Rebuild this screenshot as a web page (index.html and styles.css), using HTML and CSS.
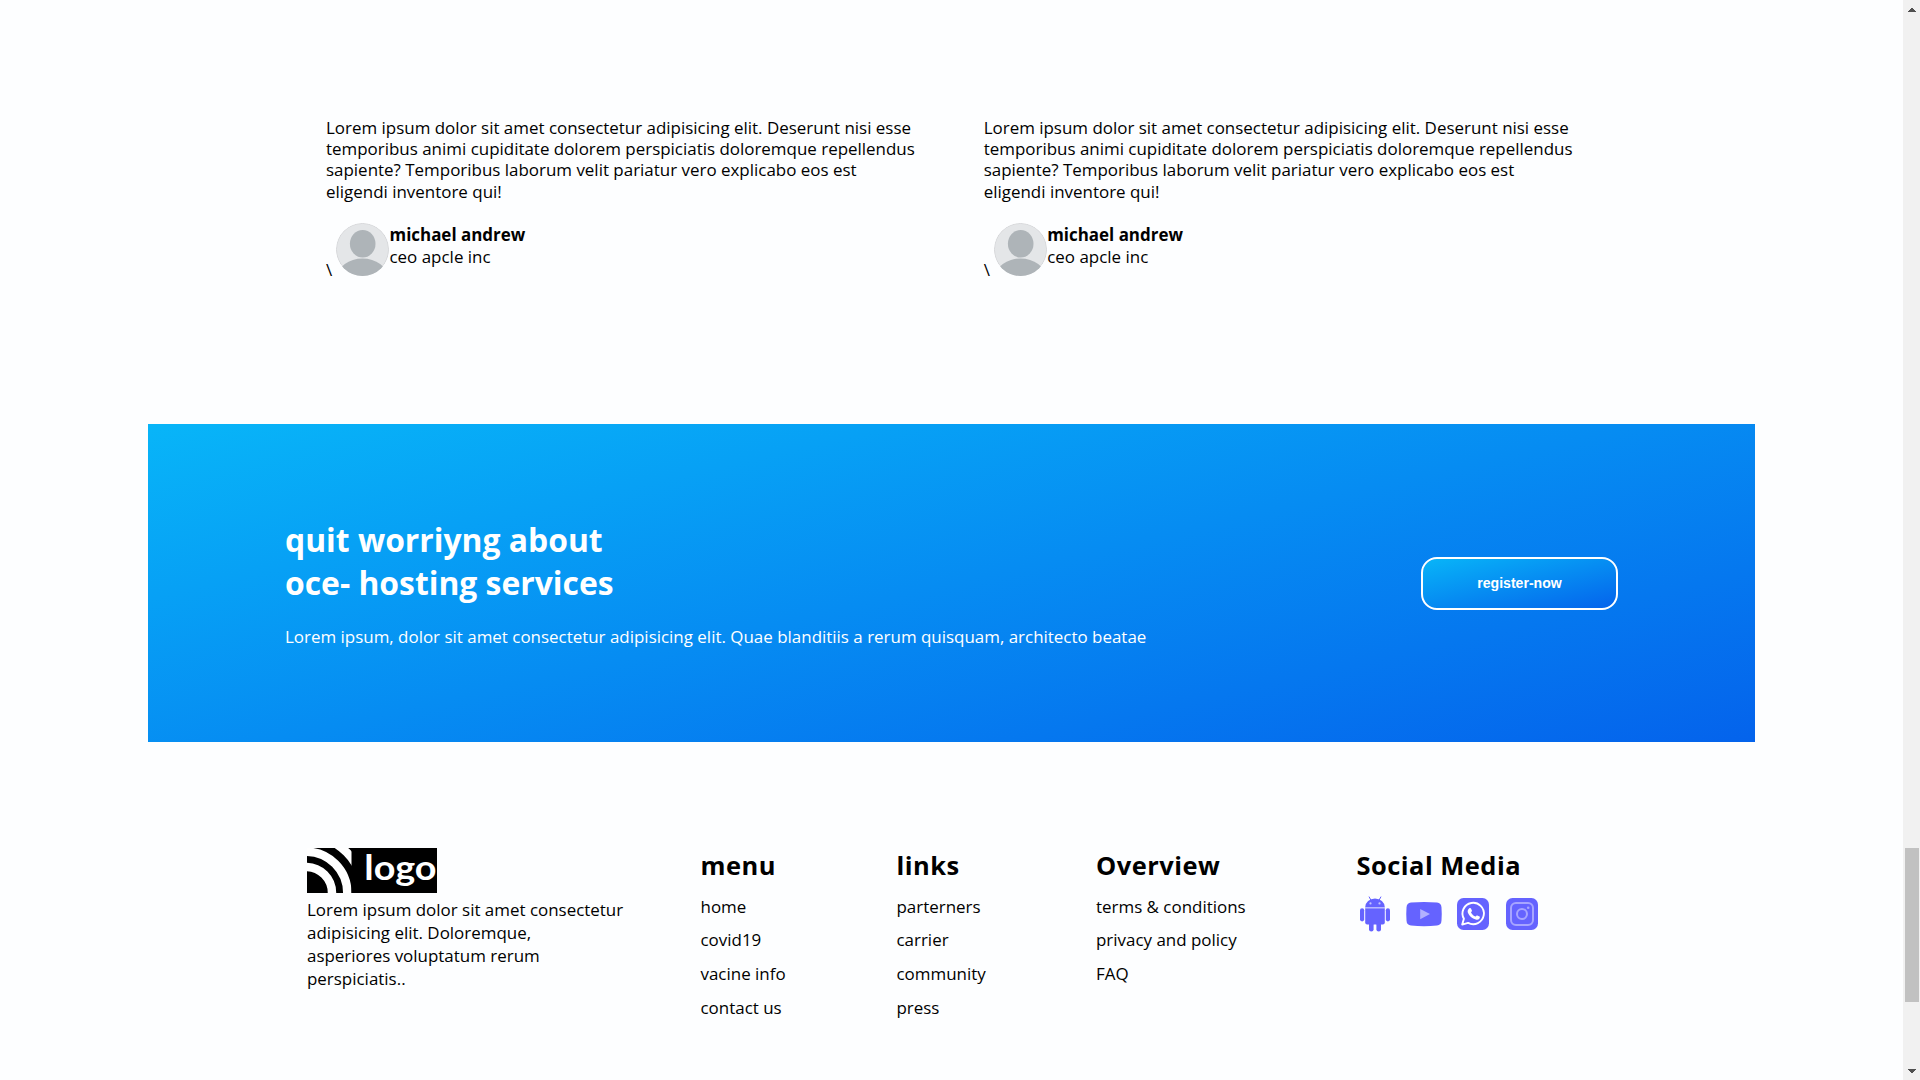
FILE: index.html
```html
<!DOCTYPE html>
<html lang="en">
<head>
<meta charset="utf-8">
<title>Hosting services</title>
<link rel="stylesheet" href="styles.css">
</head>
<body>
<div class="page">
  <section class="testimonials">
    <article class="testimonial">
      <p class="quote">Lorem ipsum dolor sit amet consectetur adipisicing elit. Deserunt nisi esse<br>temporibus animi cupiditate dolorem perspiciatis doloremque repellendus<br>sapiente? Temporibus laborum velit pariatur vero explicabo eos est<br>eligendi inventore qui!</p>
      <div class="author">
        <span class="slash">\</span>
        <svg class="avatar" viewBox="0 0 53 53"><defs><clipPath id="face"><circle cx="26.5" cy="26.5" r="26.5"/></clipPath></defs><g clip-path="url(#face)"><circle cx="26.5" cy="26.5" r="26.1" fill="#e4e6e8" stroke="#cfd1d3" stroke-width=".8"/><ellipse cx="26.7" cy="20.8" rx="12.8" ry="13.8" fill="#aeb4b8"/><ellipse cx="26.5" cy="54" rx="25" ry="18.5" fill="#aeb4b8"/></g></svg>
        <div class="who"><h4>michael andrew</h4><p>ceo apcle inc</p></div>
      </div>
    </article>
    <article class="testimonial">
      <p class="quote">Lorem ipsum dolor sit amet consectetur adipisicing elit. Deserunt nisi esse<br>temporibus animi cupiditate dolorem perspiciatis doloremque repellendus<br>sapiente? Temporibus laborum velit pariatur vero explicabo eos est<br>eligendi inventore qui!</p>
      <div class="author">
        <span class="slash">\</span>
        <svg class="avatar" viewBox="0 0 53 53"><g clip-path="url(#face)"><circle cx="26.5" cy="26.5" r="26.1" fill="#e4e6e8" stroke="#cfd1d3" stroke-width=".8"/><ellipse cx="26.7" cy="20.8" rx="12.8" ry="13.8" fill="#aeb4b8"/><ellipse cx="26.5" cy="54" rx="25" ry="18.5" fill="#aeb4b8"/></g></svg>
        <div class="who"><h4>michael andrew</h4><p>ceo apcle inc</p></div>
      </div>
    </article>
  </section>

  <section class="cta">
    <div>
      <h2>quit worriyng about<br>oce- hosting services</h2>
      <p>Lorem ipsum, dolor sit amet consectetur adipisicing elit. Quae blanditiis a rerum quisquam, architecto beatae</p>
    </div>
    <button class="register">register-now</button>
  </section>

  <footer class="footer">
    <div class="about">
      <svg class="logo" viewBox="0 0 130 45">
        <rect width="130" height="45" fill="#000"/>
        <svg width="44.5" height="45" viewBox="0 0 44.5 45"><g fill="none" stroke="#fff"><circle cx="-1" cy="45" r="26" stroke-width="8.5"/><circle cx="-1" cy="45" r="41.3" stroke-width="8.5"/><circle cx="-1" cy="45" r="57.5" stroke-width="8.5"/></g></svg>
        <text x="57.3" y="31.7" textLength="72.2" lengthAdjust="spacingAndGlyphs" class="logo-text">logo</text>
      </svg>
      <p>Lorem ipsum dolor sit amet consectetur<br>adipisicing elit. Doloremque,<br>asperiores voluptatum rerum<br>perspiciatis..</p>
    </div>
    <div><h3>menu</h3><ul><li>home</li><li>covid19</li><li>vacine info</li><li>contact us</li></ul></div>
    <div><h3>links</h3><ul><li>parterners</li><li>carrier</li><li>community</li><li>press</li></ul></div>
    <div><h3>Overview</h3><ul><li>terms &amp; conditions</li><li>privacy and policy</li><li>FAQ</li></ul></div>
    <div>
      <h3>Social Media</h3>
      <div class="social">
        <svg viewBox="0 0 38 38"><g fill="#6563ff"><path d="M9.2 12.2a9.8 8.8 0 0 1 19.6 0z"/><path d="M9.2 13.2h19.6v14.2a2 2 0 0 1-2 2H11.2a2 2 0 0 1-2-2z"/><rect x="4" y="13.2" width="4.2" height="13.2" rx="2.1"/><rect x="29.8" y="13.2" width="4.2" height="13.2" rx="2.1"/><rect x="13" y="27" width="4.6" height="9.6" rx="2.3"/><rect x="20.4" y="27" width="4.6" height="9.6" rx="2.3"/></g><path d="m13 1.600 2 3.800M25 1.600l-2 3.800" stroke="#6563ff"/><path d="M9.2 12.7h19.6" stroke="#b2b1ff"/><circle cx="14.5" cy="8.4" r="1.1" fill="#c4c3ff"/><circle cx="23.5" cy="8.4" r="1.1" fill="#c4c3ff"/></svg>
        <svg viewBox="0 0 38 38"><path d="M6 7.6q13-1.2 26 0 4.3.5 4.5 5 .5 6.400 0 13-.2 4.600-4.500 5-13 1.200-26 0-4.300-.4-4.500-5-.5-6.600 0-13 .2-4.500 4.500-5z" fill="#6563ff"/><path d="M15.200 14v10.200l9.800-5.100z" fill="#b2b1ff"/></svg>
        <svg viewBox="0 0 38 38"><rect x="3" y="3" width="32" height="32" rx="6.500" fill="#6563ff"/><path d="M8.200 29.600l1.700-5.800a10.700 10.700 0 1 1 4.200 4.100z" fill="none" stroke="#fff" stroke-width="1.900" stroke-linejoin="round"/><path d="M15.300 13.300c.6-.6 1.400-.5 1.700.2l.9 2.100c.2.500-.1 1-.9 1.900 1 2 2.500 3.300 4.600 4.100.8-.9 1.100-1.400 1.700-1.100l2.200 1.100c.6.3.5 1.200 0 1.900-.8 1.100-2.200 1.400-3.700 1-3.800-1-6.700-3.600-7.900-6.800-.6-1.700 0-3.300 1.400-4.400z" fill="#fff"/></svg>
        <svg viewBox="0 0 38 38"><rect x="3" y="3" width="32" height="32" rx="6.500" fill="#6563ff"/><g fill="none" stroke="#a7a5ff" stroke-width="2"><rect x="8" y="8" width="22" height="22" rx="5"/><circle cx="19" cy="19" r="5"/></g><circle cx="25.200" cy="12.800" r="1.300" fill="#a7a5ff"/></svg>
      </div>
    </div>
  </footer>
</div>
<div class="scrollbar">
  <svg viewBox="0 0 17 17"><path d="M5 12V11h1v-1h1V9h1V8h2v1h1v1h1v1h1v1z" fill="#505050" shape-rendering="crispEdges"/></svg>
  <div class="thumb"></div>
  <svg viewBox="0 0 17 17"><path d="M5 6V7h1v1h1v1h1v1h2V9h1V8h1V7h1V6z" fill="#505050" shape-rendering="crispEdges"/></svg>
</div>
</body>
</html>
```
FILE: styles.css
```css
* { box-sizing: border-box; margin: 0; padding: 0; }
body {
  display: flex;
  width: 1920px;
  height: 1080px;
  overflow: hidden;
  background: #fdfeff;
  color: #000;
  font: 16.96px/23px "Open Sans", sans-serif;
}
svg { display: block; flex: none; }
.page { width: 1903px; }

.testimonials {
  display: grid;
  grid-template-columns: 657.7px 1fr;
  height: 424px;
  padding: 116.7px 0 0 326px;
}
.quote { line-height: 21.33px; white-space: nowrap; }
.author { display: flex; margin-top: 20.8px; }
.slash { width: 10px; padding-top: 35px; }
.avatar { width: 53px; height: 53px; }
.who { padding: 1px 0 0 .5px; line-height: 22px; }
.who h4 { font-weight: 700; font-size: 16.96px; }

.cta {
  display: flex;
  align-items: center;
  justify-content: space-between;
  width: 1607px;
  height: 318px;
  margin: 0 auto;
  padding: 0 137px;
  background: linear-gradient(167deg, #08b5f8 0%, #0463ec 100%);
  color: #fff;
}
.cta h2 { margin-bottom: 21px; font-size: 31.85px; line-height: 43px; }
.register {
  width: 197px;
  height: 53px;
  border: 2px solid #fff;
  border-radius: 16px;
  background: linear-gradient(167deg, #08b5f8 0%, #0463ec 100%) padding-box;
  color: #fff;
  font: bold 14.1px "Liberation Sans", sans-serif;
}

.footer {
  display: grid;
  grid-template-columns: 393.5px 196px 199.5px 260.5px 1fr;
  padding: 106px 0 0 307px;
}
.footer h3 {
  margin: 0 0 7.7px;
  font-size: 25.44px;
  font-weight: 700;
  line-height: 34px;
  letter-spacing: .5px;
}
.footer ul { list-style: none; }
.footer li { line-height: 33.7px; }
.logo { width: 130px; height: 45px; margin-bottom: 5px; }
.logo-text { font: bold 35px "Lato", sans-serif; fill: #fff; }
.social { display: flex; gap: 11px; margin: 13px 0 0 -1px; }
.social svg { width: 38px; height: 38px; }

.scrollbar {
  display: flex;
  flex-direction: column;
  width: 17px;
  background: #f1f1f1;
}
.scrollbar svg { width: 17px; height: 17px; }
.thumb { width: 14px; height: 154px; margin: 831px auto 61px 2px; background: #c1c1c1; }
```
